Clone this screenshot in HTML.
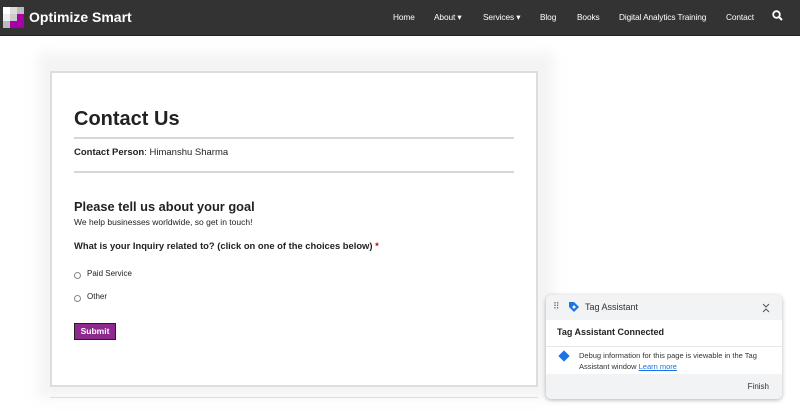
<!DOCTYPE html>
<html><head><meta charset="utf-8"><style>
*{margin:0;padding:0;box-sizing:border-box}
body{width:800px;height:414px;overflow:hidden;background:#fff;font-family:"Liberation Sans",Arial,sans-serif;position:relative}
.nav{position:absolute;left:0;top:0;width:800px;height:36px;background:#333;border-bottom:1px solid #222}
.logo{position:absolute;left:3px;top:7px;width:21px;height:21px}
.logo i{position:absolute;width:7px;height:7px}
.brand{position:absolute;left:29px;top:9px;color:#fff;font-weight:bold;font-size:14px}
.nav a{position:absolute;top:12px;color:#fff;font-size:8.3px;text-decoration:none;letter-spacing:-0.1px}
.shadow{position:absolute;left:38px;top:52px;width:516px;height:346px;background:#f4f4f4;filter:blur(6px)}
.card{position:absolute;left:50px;top:71px;width:488px;height:316px;background:#fff;border:2px solid #ddd}
.bottomline{position:absolute;left:50px;top:397px;width:488px;height:1px;background:#ddd}
h1{position:absolute;left:22px;top:35px;font-size:20px;color:#222}
.hr{position:absolute;left:22px;width:440px;height:1px;background:#d6d6d6}
.t{position:absolute;left:22px;color:#222;white-space:nowrap}
.radio{position:absolute;left:22px;width:7px;height:7px;border:1px solid #888;border-radius:50%}
.btn{position:absolute;left:22px;top:250px;width:42px;height:17px;background:#8e2a8e;border:1px solid #222;color:#fff;font-weight:bold;font-size:8.5px;text-align:center;line-height:15px}
.ta{position:absolute;left:546px;top:295px;width:236px;height:104px;background:#fff;border-radius:5px;box-shadow:0 1px 4px rgba(0,0,0,.3);overflow:hidden;font-size:8px;color:#222}
</style></head><body>
<div class="nav">
<div class="logo">
<i style="left:0;top:0;background:#fff"></i><i style="left:7px;top:0;background:#ddd"></i><i style="left:14px;top:0;background:#bbb"></i>
<i style="left:0;top:7px;background:#eee"></i><i style="left:7px;top:7px;background:#ccc"></i><i style="left:14px;top:7px;background:#a0a"></i>
<i style="left:0;top:14px;background:#bbb"></i><i style="left:7px;top:14px;background:#a0a"></i><i style="left:14px;top:14px;background:#a0a"></i>
</div>
<div class="brand">Optimize Smart</div>
<a style="left:393px">Home</a><a style="left:434px">About ▾</a><a style="left:483px">Services ▾</a><a style="left:540px">Blog</a><a style="left:577px">Books</a><a style="left:619px">Digital Analytics Training</a><a style="left:726px">Contact</a>
<svg style="position:absolute;left:772px;top:10px" width="11" height="11" viewBox="0 0 11 11"><circle cx="4.5" cy="4.5" r="3.3" stroke="#fff" stroke-width="1.8" fill="none"/><path d="M7 7L10 10" stroke="#fff" stroke-width="2"/></svg>
</div>
<div class="shadow"></div>
<div class="card">
<h1>Contact Us</h1>
<div class="hr" style="top:64px;height:2px"></div>
<div class="t" style="top:74px;font-size:9.5px"><b>Contact Person</b>: Himanshu Sharma</div>
<div class="hr" style="top:98px;height:2px"></div>
<div class="t" style="top:126px;font-size:12.8px;font-weight:bold">Please tell us about your goal</div>
<div class="t" style="top:144px;font-size:8.5px">We help businesses worldwide, so get in touch!</div>
<div class="t" style="top:167px;font-size:9.4px;font-weight:bold">What is your Inquiry related to? (click on one of the choices below) <span style="color:#c00">*</span></div>
<div class="radio" style="top:199px"></div><div class="t" style="left:35px;top:196px;font-size:8px">Paid Service</div>
<div class="radio" style="top:222px"></div><div class="t" style="left:35px;top:219px;font-size:8px">Other</div>
<div class="btn">Submit</div>
</div>
<div class="bottomline"></div>
<div class="ta">
<div style="height:25px;background:#f1f3f4;position:relative">
<span style="position:absolute;left:7px;top:6px;color:#666;font-size:9px;letter-spacing:-1px">⠿</span>
<svg style="position:absolute;left:22px;top:6px" width="12" height="12" viewBox="0 0 12 12"><path d="M1 1h5l5 5-5 5-5-5z" fill="#1a73e8"/><circle cx="6" cy="6" r="1.5" fill="#fff"/></svg>
<span style="position:absolute;left:39px;top:7px;font-size:9px;color:#333">Tag Assistant</span>
<svg style="position:absolute;right:12px;top:8px" width="8" height="10" viewBox="0 0 8 10"><path d="M1 1l3 3 3-3M1 9l3-3 3 3" stroke="#555" fill="none"/></svg>
</div>
<div style="height:27px;border-bottom:1px solid #e8e8e8;padding:7px 11px;font-size:9px;font-weight:bold">Tag Assistant Connected</div>
<div style="position:relative;height:27px">
<div style="position:absolute;left:14px;top:5px;width:8px;height:8px;background:#1a73e8;transform:rotate(45deg)"></div>
<div style="position:absolute;left:33px;top:3px;font-size:7.5px;line-height:11px;color:#333">Debug information for this page is viewable in the Tag<br>Assistant window <span style="color:#1a73e8;text-decoration:underline">Learn more</span></div>
</div>
<div style="height:25px;background:#f1f3f4;position:relative"><span style="position:absolute;right:13px;top:8px;font-size:8px;color:#333">Finish</span></div>
</div>
</body></html>
